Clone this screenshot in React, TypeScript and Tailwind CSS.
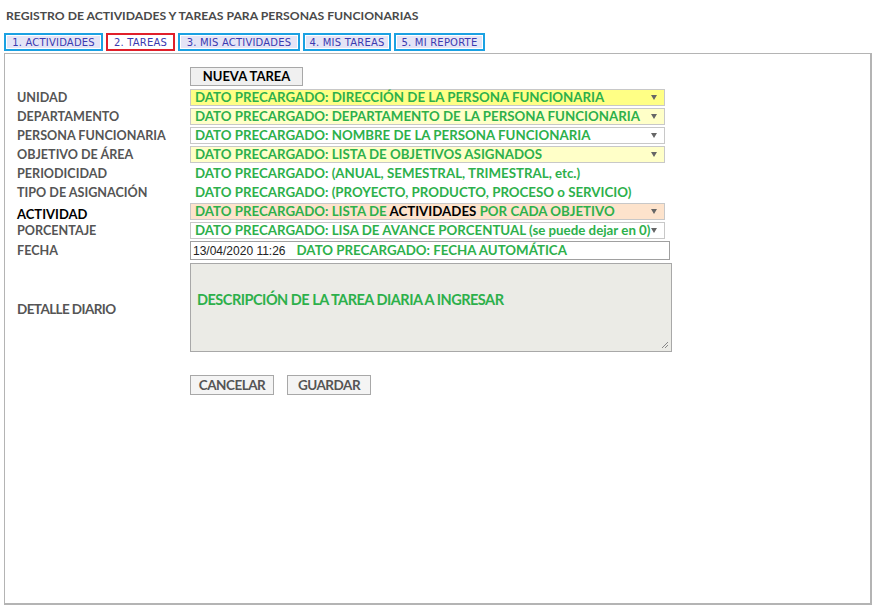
import { ReactNode } from 'react'

const tabs = [
  { label: '1. ACTIVIDADES', w: 'w-[99px]', active: false },
  { label: '2. TAREAS', w: 'w-[69px]', active: true },
  { label: '3. MIS ACTIVIDADES', w: 'w-[122px]', active: false },
  { label: '4. MIS TAREAS', w: 'w-[88px]', active: false },
  { label: '5. MI REPORTE', w: 'w-[91px]', active: false },
]

// little dropdown triangle of the selects
function Arrow() {
  return (
    <svg className="absolute right-[7px] top-[5px]" width="6" height="5" viewBox="0 0 6 5">
      <path d="M0 0 H6 L3 5 Z" fill="#666" />
    </svg>
  )
}

function FakeSelect({ bg, children }: { bg: string; children: ReactNode }) {
  return (
    <div className={`relative flex h-[17px] w-[475px] items-center border border-[#c8c8c8] pl-[4px] ${bg}`}>
      <Arrow />
      <span className="relative whitespace-nowrap">{children}</span>
    </div>
  )
}

function Row({ label, dark, children }: { label: string; dark?: boolean; children: ReactNode }) {
  return (
    <div className="flex h-[19px] items-center">
      <div
        className={`w-[173px] shrink-0 whitespace-nowrap ${
          dark ? 'pt-[6px] text-[13px] font-bold text-black' : 'pt-[2px] text-[12.6px] font-bold text-[#555]'
        }`}
      >
        {label}
      </div>
      <div className="text-[13.3px] font-bold text-[#2db04b]">{children}</div>
    </div>
  )
}

export default function App() {
  return (
    <div className="h-[616px] w-[876px] bg-white font-['Lato',sans-serif]">
      <div className="px-[6px] pt-[7px] text-[12.2px] font-bold text-[#4a4a4a]">
        REGISTRO DE ACTIVIDADES Y TAREAS PARA PERSONAS FUNCIONARIAS
      </div>

      {/* pestañas */}
      <div className="mt-[8px] flex gap-[3px] pl-[4px]">
        {tabs.map((t) => (
          <div
            key={t.label}
            className={`flex h-[18px] ${t.w} items-center justify-center border-2 shadow-[inset_0_0_0_1px_#ffffff] ${
              t.active ? 'border-[#e0202a] bg-white' : 'border-[#1ba1e2] bg-[#e4e4f6]'
            } whitespace-nowrap font-['DejaVu_Sans',sans-serif] text-[10px] tracking-[0.2px] text-[#3a3ab0]`}
          >
            {t.label}
          </div>
        ))}
      </div>

      <div className="mx-[4px] mt-[2px] h-[552px] border-2 border-t border-l border-[#b4b4b4] pl-[12px] pt-[13px]">
        <div className="flex pl-[173px]">
          <button className="h-[19px] w-[113px] border border-[#a8a8a8] bg-[#f0f0f0] text-[13px] font-bold leading-none text-black">
            NUEVA TAREA
          </button>
        </div>

        <div className="mt-[2px]">
          <Row label="UNIDAD">
            <FakeSelect bg="bg-[#ffff85]">DATO PRECARGADO: DIRECCIÓN DE LA PERSONA FUNCIONARIA</FakeSelect>
          </Row>
          <Row label="DEPARTAMENTO">
            <FakeSelect bg="bg-[#ffffc8]">DATO PRECARGADO: DEPARTAMENTO DE LA PERSONA FUNCIONARIA</FakeSelect>
          </Row>
          <Row label="PERSONA FUNCIONARIA">
            <FakeSelect bg="bg-white">DATO PRECARGADO: NOMBRE DE LA PERSONA FUNCIONARIA</FakeSelect>
          </Row>
          <Row label="OBJETIVO DE ÁREA">
            <FakeSelect bg="bg-[#ffffc8]">DATO PRECARGADO: LISTA DE OBJETIVOS ASIGNADOS</FakeSelect>
          </Row>
          <Row label="PERIODICIDAD">
            <div className="pl-[5px]">DATO PRECARGADO: (ANUAL, SEMESTRAL, TRIMESTRAL, etc.)</div>
          </Row>
          <Row label="TIPO DE ASIGNACIÓN">
            <div className="pl-[5px]">DATO PRECARGADO: (PROYECTO, PRODUCTO, PROCESO o SERVICIO)</div>
          </Row>
          <Row label="ACTIVIDAD" dark>
            <FakeSelect bg="bg-[#fde3cc]">
              DATO PRECARGADO: LISTA DE <span className="text-black">ACTIVIDADES</span> POR CADA OBJETIVO
            </FakeSelect>
          </Row>
          <Row label="PORCENTAJE">
            <FakeSelect bg="bg-white">
              DATO PRECARGADO: LISA DE AVANCE PORCENTUAL (se puede dejar en 0)
            </FakeSelect>
          </Row>
          <div className="flex h-[21px] items-center">
            <div className="w-[173px] shrink-0 pt-[2px] text-[12.6px] font-bold text-[#555]">FECHA</div>
            <div className="flex h-[19px] w-[480px] items-center border border-[#a0a0a0] bg-white pl-[2px]">
              <span className="font-['Liberation_Sans',sans-serif] text-[12px] text-[#222]">13/04/2020 11:26</span>
              <span className="ml-[11px] text-[13.3px] font-bold text-[#2db04b]">DATO PRECARGADO: FECHA AUTOMÁTICA</span>
            </div>
          </div>

          <div className="mt-[2px] flex items-center">
            <div className="w-[173px] shrink-0 pt-[3px] text-[13.5px] font-bold tracking-[-0.6px] text-[#555]">
              DETALLE DIARIO
            </div>
            <div className="relative flex h-[89px] w-[482px] items-center border border-[#a8a8a8] bg-[#ebebe6] pl-[6px]">
              <span className="-mt-[16px] text-[14.5px] font-bold tracking-[-0.5px] text-[#2db04b]">
                DESCRIPCIÓN DE LA TAREA DIARIA A INGRESAR
              </span>
              <svg className="absolute bottom-[2px] right-[2px]" width="8" height="8" viewBox="0 0 8 8">
                <path d="M7 1 L1 7 M7 4 L4 7" stroke="#888" strokeWidth="1" />
              </svg>
            </div>
          </div>

          <div className="mt-[23px] flex gap-[13px] pl-[173px]">
            <button className="h-[20px] w-[84px] border border-[#a8a8a8] bg-[#f4f4f4] text-[13.5px] font-bold leading-none tracking-[-0.5px] text-[#555]">
              CANCELAR
            </button>
            <button className="h-[20px] w-[84px] border border-[#a8a8a8] bg-[#f4f4f4] text-[13.5px] font-bold leading-none tracking-[-0.5px] text-[#555]">
              GUARDAR
            </button>
          </div>
        </div>
      </div>
    </div>
  )
}
